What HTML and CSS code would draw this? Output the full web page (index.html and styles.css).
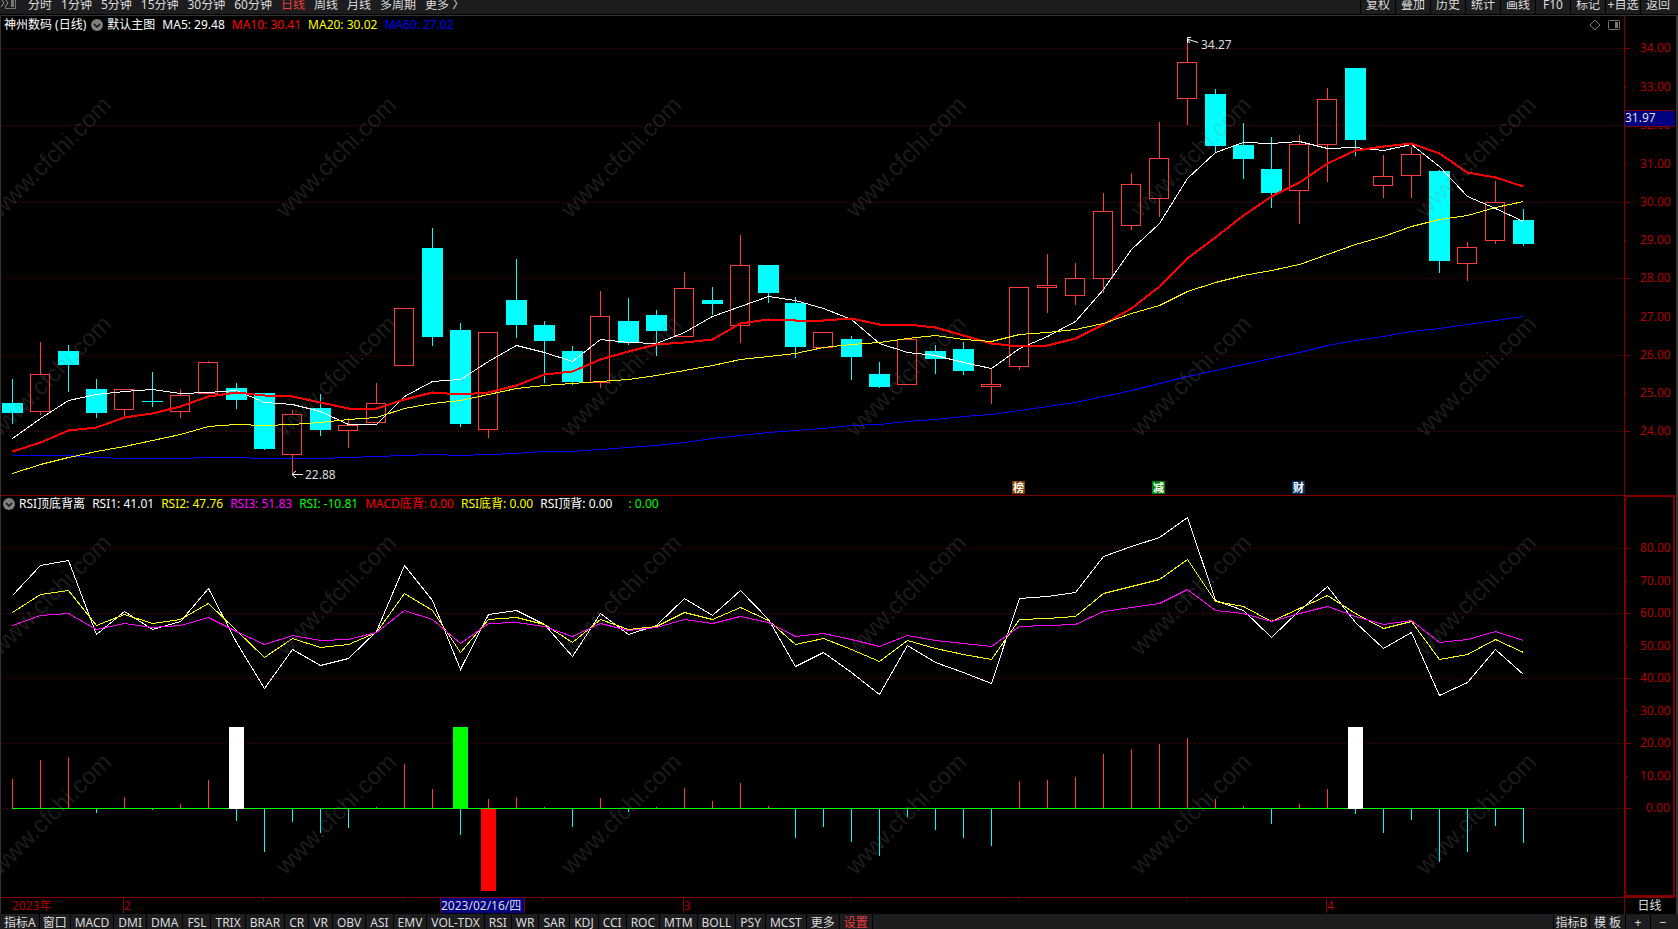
FILE: index.html
```html
<!DOCTYPE html>
<html lang="zh-CN">
<head>
    <meta charset="utf-8">
    <title>神州数码 日线</title>
    <link rel="stylesheet" href="styles.css">
</head>
<body>
    <div class="app">
        <header class="toolbar">
            <svg class="side-icon" width="18" height="14" viewBox="0 0 18 14">
                <path d="M1 -1L4 3L1 7M5 -1L8 3L5 7" fill="none" stroke="#999" />
                <path d="M8 -2H15.500V8.500H5.500V6" fill="none" stroke="#777" />
                <rect x="11" y="0" width="3" height="7" fill="#777" />
            </svg>
            <nav class="periods">
                <button>分时</button>
                <button>1分钟</button>
                <button>5分钟</button>
                <button>15分钟</button>
                <button>30分钟</button>
                <button>60分钟</button>
                <button class="active">日线</button>
                <button>周线</button>
                <button>月线</button>
                <button>多周期</button>
                <button>更多 〉</button>
            </nav>
            <nav class="tools">
                <button>复权</button>
                <button>叠加</button>
                <button>历史</button>
                <button>统计</button>
                <button>画线</button>
                <button>F10</button>
                <button>标记</button>
                <button>+自选</button>
                <button>返回</button>
            </nav>
        </header>

        <main class="panels">
            <section class="panel">
                <div class="plot">
                    <div class="legend">
                        <span class="stock">神州数码 (日线)</span>
                        <svg class="drop" width="12" height="12" viewBox="0 0 12 12"><circle cx="6" cy="6" r="6" fill="#808080" /><path d="M3 5L6 8L9 5" fill="none" stroke="#111" stroke-width="1.500" /></svg>
                        <span>默认主图</span>
                        <span>MA5: 29.48</span>
                        <span class="red">MA10: 30.41</span>
                        <span class="yellow">MA20: 30.02</span>
                        <span class="blue">MA60: 27.02</span>
                        <svg class="corner" width="32" height="12" viewBox="0 0 32 12">
                            <path d="M6 1L11 6L6 11L1 6Z" fill="none" stroke="#777" />
                            <rect x="19.500" y="1.500" width="11" height="9" rx="1" fill="none" stroke="#777" />
                            <rect x="26" y="3" width="3" height="6" fill="#777" />
                        </svg>
                    </div>
                    <svg class="chart" id="kline"></svg>
                </div>
                <svg class="axis" id="priceAxis"></svg>
            </section>

            <section class="panel rsi">
                <div class="plot">
                    <div class="legend">
                        <svg class="drop" width="12" height="12" viewBox="0 0 12 12"><circle cx="6" cy="6" r="6" fill="#808080" /><path d="M3 5L6 8L9 5" fill="none" stroke="#111" stroke-width="1.500" /></svg>
                        <span>RSI顶底背离</span>
                        <span>RSI1: 41.01</span>
                        <span class="yellow">RSI2: 47.76</span>
                        <span class="magenta">RSI3: 51.83</span>
                        <span class="green">RSI: -10.81</span>
                        <span class="red">MACD底背: 0.00</span>
                        <span class="yellow">RSI底背: 0.00</span>
                        <span>RSI顶背: 0.00</span>
                        <span class="green unnamed">: 0.00</span>
                    </div>
                    <svg class="chart" id="rsi"></svg>
                </div>
                <svg class="axis" id="rsiAxis"></svg>
            </section>

            <section class="dates">
                <svg class="chart" id="dateAxis"></svg>
                <div class="cycle">日线</div>
            </section>
        </main>

        <footer class="tabs">
            <nav class="indicators">
                <button class="narrow">指标A</button>
                <button class="narrow">窗口</button>
                <button>MACD</button>
                <button>DMI</button>
                <button>DMA</button>
                <button>FSL</button>
                <button>TRIX</button>
                <button>BRAR</button>
                <button>CR</button>
                <button>VR</button>
                <button>OBV</button>
                <button>ASI</button>
                <button>EMV</button>
                <button>VOL-TDX</button>
                <button>RSI</button>
                <button>WR</button>
                <button>SAR</button>
                <button>KDJ</button>
                <button>CCI</button>
                <button>ROC</button>
                <button>MTM</button>
                <button>BOLL</button>
                <button>PSY</button>
                <button>MCST</button>
                <button>更多</button>
                <button class="active">设置</button>
            </nav>
            <nav class="zoom">
                <button class="wide">指标B</button>
                <button class="wide">模 板</button>
                <button>+</button>
                <button>−</button>
            </nav>
        </footer>
    </div>

    <script src="chart.js"></script>
</body>
</html>
```

FILE: styles.css
```css
* {
    box-sizing: border-box;
}

body {
    margin: 0;
    background-color: #000000;
    color: #ffffff;
    font-family: "Noto Sans", "Noto Sans CJK SC", sans-serif;
    font-size: 12px;
    overflow: hidden;
}

button {
    margin: 0;
    padding: 0;
    border: 0;
    background: none;
    color: #dcdcdc;
    font: inherit;
    white-space: nowrap;
    cursor: pointer;
}

button.active {
    color: #f03c3c;
}

.app {
    display: flex;
    flex-direction: column;
    height: 100vh;
}

/* top bar */
.toolbar {
    display: flex;
    flex: none;
    height: 14px;
    background-color: #1d1d1f;
    overflow: hidden;
}

.toolbar button {
    height: 14px;
    padding-bottom: 4px;
    line-height: 10px;
}

.side-icon {
    flex: none;
    margin-right: 10px;
}

.periods {
    display: flex;
    flex: 1;
    gap: 9px;
}

.tools {
    display: flex;
    margin-right: 3px;
}

.tools button {
    width: 35px;
    border-left: 1px solid #000000;
}

/* chart panels */
.panels {
    flex: 1;
    margin-top: 1px;
    border-top: 1px solid #333333;
    border-left: 1px solid #333333;
    border-right: 2px solid #333333;
}

.panel {
    display: flex;
}

.plot {
    flex: 1;
    min-width: 0;
}

.legend {
    display: flex;
    align-items: center;
    gap: 7px;
    height: 16px;
    padding-left: 3px;
    line-height: 16px;
    white-space: nowrap;
}

.panel:first-child .legend {
    padding-top: 2px;
}

.drop {
    flex: none;
    margin-right: -3px;
}

.stock {
    margin-right: -2px;
}

.corner {
    margin-left: auto;
    margin-right: 3px;
}

.unnamed {
    margin-left: 9px;
}

.red { color: #ff0000; }
.yellow { color: #ffff00; }
.blue { color: #0000ff; }
.magenta { color: #ff00ff; }
.green { color: #00ff00; }

.chart {
    display: block;
    width: 100%;
    height: 463px;
}

.axis {
    display: block;
    flex: none;
    width: 52px;
    height: 479px;
}

.rsi {
    border-top: 1px solid #800000;
}

.rsi .legend {
    padding-left: 2px;
}

.rsi .chart {
    height: 385px;
}

.rsi .axis {
    height: 401px;
}

.dates {
    display: flex;
    border-top: 1px solid #800000;
}

.dates .chart {
    flex: 1;
    min-width: 0;
    height: 16px;
}

.cycle {
    width: 52px;
    padding-right: 2px;
    border-left: 1px solid #800000;
    line-height: 16px;
    text-align: center;
    color: #dcdcdc;
}

/* bottom bar */
.tabs {
    display: flex;
    flex: none;
    justify-content: space-between;
    height: 15px;
    padding: 0 3px 0 1px;
    background-color: #1d1d1f;
    overflow: hidden;
}

.tabs nav {
    display: flex;
}

.tabs button {
    height: 15px;
    padding: 0 4px;
    border-right: 1px solid #000000;
    line-height: 17px;
}

.tabs .narrow {
    padding: 0 3px;
}

.tabs .zoom button {
    width: 25px;
    padding: 0;
    border-right: 0;
    border-left: 1px solid #000000;
}

.tabs .zoom .wide {
    width: 36px;
}

/* svg parts */
text {
    font-family: "Noto Sans", "Noto Sans CJK SC", sans-serif;
    font-size: 12px;
    fill: #dcdcdc;
}

.scale {
    fill: #b00000;
}

.flag {
    font-size: 11px;
    font-weight: bold;
    fill: #ffffff;
    text-anchor: middle;
}

.watermark {
    font-family: "Liberation Sans", Arial, sans-serif;
    font-size: 24px;
    fill: #808080;
    fill-opacity: 0.22;
    text-anchor: middle;
}
```

FILE: chart.js
```js
// u = up (hollow), d = down (filled): [type, high, top, bottom, low]
const candles = [
    ['d', 379, 403, 413, 424], ['u', 342, 374, 411, 415], ['d', 345, 351, 365, 392], ['d', 379, 389, 413, 418],
    ['u', 389, 389, 409, 416], ['d', 372, 401, 402, 407], ['u', 389, 395, 411, 418], ['u', 361, 362, 393, 393],
    ['d', 383, 388, 400, 409], ['d', 393, 393, 449, 450], ['u', 410, 414, 454, 474], ['d', 394, 408, 430, 436],
    ['u', 418, 425, 430, 448], ['u', 383, 403, 422, 422], ['u', 308, 308, 365, 365], ['d', 228, 248, 337, 346],
    ['d', 323, 330, 424, 427], ['u', 332, 332, 429, 438], ['d', 259, 300, 325, 338], ['d', 321, 325, 341, 383],
    ['d', 346, 351, 382, 385], ['u', 291, 316, 382, 388], ['d', 298, 321, 343, 345], ['d', 310, 315, 331, 356],
    ['u', 272, 288, 336, 336], ['d', 287, 300, 304, 315], ['u', 235, 265, 325, 343], ['d', 265, 265, 293, 303],
    ['d', 297, 303, 347, 358], ['u', 332, 332, 347, 349], ['d', 336, 339, 357, 380], ['d', 362, 374, 387, 388],
    ['u', 339, 339, 384, 384], ['d', 345, 351, 359, 374], ['d', 342, 349, 371, 375], ['u', 369, 384, 386, 404],
    ['u', 287, 287, 366, 370], ['u', 254, 285, 287, 313], ['u', 263, 278, 295, 305], ['u', 193, 211, 278, 293],
    ['u', 173, 184, 225, 230], ['u', 122, 158, 198, 217], ['u', 38, 62, 98, 125], ['d', 89, 94, 146, 152],
    ['d', 123, 145, 159, 179], ['d', 137, 169, 193, 208], ['u', 135, 144, 190, 224], ['u', 88, 99, 144, 182],
    ['d', 68, 68, 140, 156], ['u', 155, 176, 185, 198], ['u', 147, 154, 175, 198], ['d', 170, 171, 261, 273],
    ['u', 242, 247, 263, 281], ['u', 181, 202, 240, 244], ['d', 209, 220, 244, 246]
];

const ma5 = [438, 418, 400, 394, 391, 389, 393, 392, 390, 402, 404, 411, 424, 424, 396, 381, 379, 361, 345, 352, 361, 339, 342, 343, 332, 316, 306, 296, 300, 308, 319, 343, 352, 355, 362, 368, 348, 336, 321, 289, 249, 223, 178, 152, 142, 143, 141, 148, 147, 150, 144, 166, 196, 208, 221];
const ma10 = [451, 442, 430, 427, 417, 413, 406, 396, 392, 395, 396, 402, 408, 408, 399, 392, 394, 392, 385, 374, 371, 359, 351, 344, 342, 339, 323, 319, 320, 320, 318, 324, 324, 327, 335, 343, 346, 345, 338, 324, 308, 286, 258, 237, 215, 196, 182, 163, 150, 146, 143, 153, 172, 177, 186];
const ma20 = [473, 464, 457, 451, 446, 440, 434, 426, 424, 425, 424, 422, 419, 417, 408, 403, 400, 394, 388, 385, 383, 381, 379, 375, 370, 365, 359, 356, 353, 347, 344, 342, 338, 335, 339, 341, 334, 332, 329, 323, 313, 305, 291, 282, 275, 270, 264, 254, 244, 236, 226, 219, 215, 207, 201];
const ma60 = [455, 455, 455, 457, 458, 458, 458, 457, 457, 458, 458, 458, 457, 456, 455, 454, 455, 454, 453, 451, 451, 449, 447, 445, 442, 438, 435, 432, 430, 428, 425, 424, 421, 419, 416, 414, 410, 406, 402, 396, 390, 383, 376, 370, 364, 358, 352, 345, 340, 336, 331, 328, 324, 320, 316];

const rsi1 = [595, 565, 560, 634, 611, 629, 621, 588, 642, 688, 649, 665, 658, 631, 565, 600, 669, 614, 610, 624, 656, 613, 634, 625, 598, 615, 590, 619, 666, 652, 672, 694, 645, 662, 672, 683, 598, 596, 592, 556, 546, 537, 517, 600, 610, 637, 610, 586, 622, 648, 632, 695, 682, 649, 674];
const rsi2 = [612, 594, 590, 625, 614, 623, 619, 603, 630, 657, 638, 647, 644, 632, 593, 610, 652, 619, 617, 624, 642, 619, 629, 626, 612, 619, 607, 620, 644, 638, 649, 661, 640, 648, 654, 659, 619, 618, 616, 593, 586, 579, 559, 601, 606, 621, 608, 595, 613, 628, 621, 659, 654, 639, 652];
const rsi3 = [625, 615, 613, 629, 623, 627, 625, 617, 631, 644, 635, 640, 639, 632, 610, 619, 643, 623, 622, 626, 636, 623, 630, 627, 619, 623, 616, 622, 636, 633, 639, 646, 635, 640, 643, 646, 626, 625, 624, 611, 607, 603, 589, 610, 613, 621, 613, 606, 616, 624, 620, 642, 639, 631, 640];
const hist = [779, 760, 757, 813, 797, 810, 804, 780, 821, 852, 822, 833, 828, 807, 764, 789, 835, 799, 797, 807, 827, 798, 812, 807, 788, 801, 783, 806, 838, 827, 842, 856, 817, 830, 838, 846, 781, 780, 777, 754, 749, 744, 738, 799, 806, 824, 804, 789, 814, 833, 820, 862, 852, 826, 843];
const signals = [[8, '#ffffff', 727], [16, '#00ff00', 727], [17, '#ff0000', 809], [48, '#ffffff', 727]];

const zero = 808;
const line = '#800000';
const up = '#ff3c3c';
const down = '#00ffff';
let width = 1624;

function x(i) {
    return Math.floor((12.55 + i * 27.98) * width / 1624);
}

function rect(x, y, w, h, fill) {
    return `<rect x="${x}" y="${y}" width="${w}" height="${h}" fill="${fill}"/>`;
}

function text(x, y, str, cls = '') {
    return `<text x="${x}" y="${y}" class="${cls}">${str}</text>`;
}

function polyline(values, color, w = 1) {
    const points = values.map((y, i) => `${x(i) + 0.5},${y + 0.5}`).join(' ');
    return `<polyline points="${points}" fill="none" stroke="${color}" stroke-width="${w}" shape-rendering="crispEdges"/>`;
}

function grid(rows) {
    return rows.map(y => `<path d="M2 ${y + 0.5}H${width}" stroke="${line}" stroke-dasharray="1 3" shape-rendering="crispEdges"/>`).join('');
}

function watermarks(rows) {
    let out = '';
    rows.forEach(y => {
        for (let cx = 53; cx < width; cx += 285) {
            out += `<text class="watermark" transform="translate(${cx} ${y}) rotate(-45)" y="5">www.cfchi.com</text>`;
        }
    });
    return out;
}

function draw(id, left, top, content) {
    const svg = document.getElementById(id);
    const box = svg.getBoundingClientRect();
    svg.setAttribute('viewBox', `${left} ${top} ${box.width} ${box.height}`);
    svg.innerHTML = content;
}

function drawKline() {
    let out = grid([48, 125, 202, 278, 355, 431]);
    candles.forEach(([type, high, top, bottom, low], i) => {
        const c = x(i);
        if (type === 'u') {
            out += rect(c, high, 1, top - high, up) + rect(c, bottom, 1, low - bottom, up);
            out += `<rect x="${c - 9.5}" y="${top + 0.5}" width="19" height="${bottom - top}" fill="none" stroke="${up}"/>`;
        } else {
            out += rect(c, high, 1, low - high, down) + rect(c - 10, top, 21, bottom - top, down);
        }
    });
    out += polyline(ma5, '#ffffff') + polyline(ma10, '#ff0000', 2) + polyline(ma20, '#ffff00') + polyline(ma60, '#0000ff');

    // highest and lowest price
    const hi = x(42), lo = x(10);
    out += `<path d="M${hi + 4} 37.5H${hi + 0.5}V43M${hi} 39L${hi + 11} 42.500M${hi} 39L${hi + 3} 43" fill="none" stroke="#fff"/>`;
    out += text(hi + 14, 49, '34.27');
    out += `<path d="M${lo + 11} 474.5H${lo}M${lo + 4} 471L${lo} 474.500L${lo + 4} 478" fill="none" stroke="#fff"/>`;
    out += text(lo + 13, 479, '22.88');

    [[36, '榜', '#804000'], [41, '减', '#008000'], [46, '财', '#003366']].forEach(([i, str, color]) => {
        out += rect(x(i) - 7, 481, 13, 13, color) + text(x(i) - 0.5, 492, str, 'flag');
    });
    draw('kline', 1, 32, out + watermarks([159, 378]));
}

function drawRsi() {
    let out = grid([548, 613, 678, 743, zero]);
    hist.forEach((y, i) => {
        out += y < zero ? rect(x(i), y, 1, zero - y, up) : rect(x(i), zero, 1, y - zero, down);
    });
    out += rect(x(0), zero, x(54) - x(0), 1, '#00ff00');
    signals.forEach(([i, color, y]) => {
        out += rect(x(i) - 7, y, 15, 82, color);
    });
    out += polyline(rsi1, '#ffffff') + polyline(rsi2, '#ffff00') + polyline(rsi3, '#ff00ff');
    draw('rsi', 1, 512, out + watermarks([597, 816]));
}

function drawAxes() {
    const prices = [48, 87, 125, 164, 202, 240, 278, 317, 355, 393, 431];
    let out = rect(0, 16, 1, 479, line);
    prices.forEach((y, i) => {
        out += rect(1, y, i % 2 ? 2 : 5, 1, line) + text(16, y + 4, (34 - i) + '.00', 'scale');
    });
    // crosshair price
    out += rect(1, 110, 50, 17, line) + rect(1, 111, 50, 15, '#000080') + text(1, 122, '31.97');
    draw('priceAxis', 0, 16, out);

    const levels = [548, 581, 613, 646, 678, 711, 743, 776, zero];
    out = `<rect x="1" y="496" width="49" height="400" fill="none" stroke="${line}" stroke-width="2"/>`;
    levels.forEach((y, i) => {
        const value = (80 - i * 10).toFixed(2);
        out += rect(2, y, i % 2 ? 2 : 5, 1, line) + text(value === '0.00' ? 22 : 16, y + 4, value, 'scale');
    });
    draw('rsiAxis', 0, 496, out);
}

function drawDates() {
    let out = text(x(0), 910, '2023年', 'scale');
    [[4, '2'], [24, '3'], [47, '4']].forEach(([i, str]) => {
        out += rect(x(i) - 1, 898, 1, 15, line) + text(x(i), 910, str, 'scale');
    });
    [9, 14, 19, 30, 36, 42].forEach(i => {
        out += rect(x(i) - 1, 898, 1, 2, line);
    });
    const d = x(16) - 20;
    out += rect(d, 898, 85, 15, line) + rect(d + 1, 898, 83, 15, '#000080') + text(d + 1, 910, '2023/02/16/四');
    draw('dateAxis', 1, 898, out);
}

function render() {
    width = document.getElementById('kline').getBoundingClientRect().width + 1;
    drawKline();
    drawRsi();
    drawAxes();
    drawDates();
}

render();
window.addEventListener('resize', render);
```
